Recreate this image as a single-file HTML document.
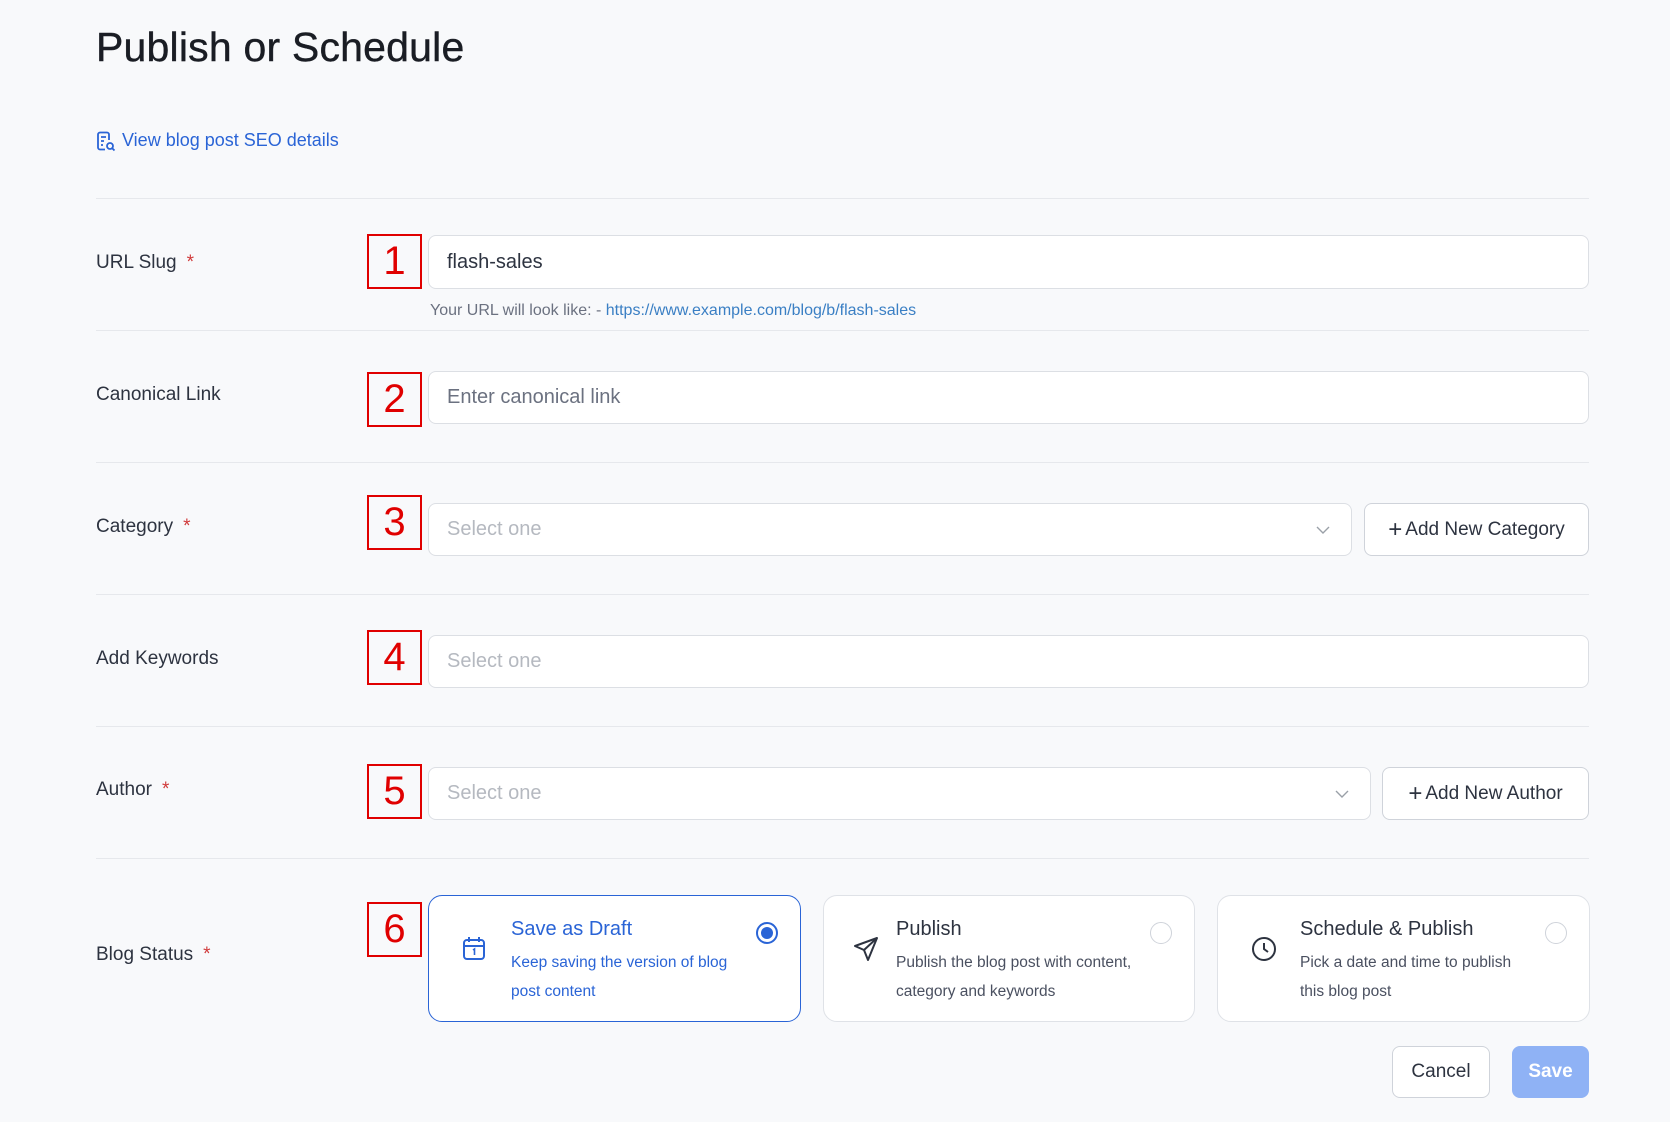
<!DOCTYPE html>
<html><head><meta charset="utf-8"><style>
*{box-sizing:border-box;margin:0;padding:0}
body{width:1670px;height:1122px;background:#f8f9fb;font-family:"Liberation Sans",sans-serif;position:relative;overflow:hidden;color:#2d3340}
.a{position:absolute}
h1{position:absolute;left:96px;top:24px;font-size:41px;font-weight:400;color:#1a1d24;letter-spacing:0.2px;-webkit-text-stroke:0.4px #1a1d24}
.hr{position:absolute;left:96px;width:1493px;height:1px;background:#e6e8ec}
.lbl{position:absolute;left:96px;font-size:19px;color:#2d3340;transform:translateY(-50%)}
.lbl i{color:#d03a3a;font-style:normal;margin-left:10px}
.box{position:absolute;left:367px;width:55px;height:55px;border:2.5px solid #e00000;color:#e00000;font-size:40px;text-align:center;line-height:50px}
.inp{position:absolute;background:#fff;border:1px solid #dcdfe4;border-radius:8px;font-size:20px;padding-left:18px;display:flex;align-items:center}
.ph{color:#b5b9c0}
.btn{position:absolute;background:#fff;border:1px solid #cfd3da;border-radius:8px;font-size:19px;color:#2d3340;display:flex;align-items:center;justify-content:center}
.card{position:absolute;top:895px;height:127px;background:#fff;border:1px solid #dfe2e7;border-radius:14px}
.card .t{position:absolute;left:82px;top:22px;font-size:20px}
.card .d{position:absolute;left:82px;top:52px;font-size:15.5px;line-height:29px;color:#4a5060}
.card .r{position:absolute;right:22px;top:26px;width:22px;height:22px;border:1.5px solid #cfd3da;border-radius:50%}
.card svg{position:absolute;left:33px;top:40px}
.chev{position:absolute;right:20px;top:18px}
</style></head><body>
<h1>Publish or Schedule</h1>
<svg class="a" style="left:96px;top:131px" width="20" height="21" viewBox="0 0 20 21" fill="none" stroke="#2a64d6" stroke-width="1.8"><path d="M13 9V3.5A2 2 0 0 0 11 1.5H4A2 2 0 0 0 2 3.5v13a2 2 0 0 0 2 2h5"/><path d="M5 6h5M5 10h3M5 14h2"/><circle cx="14" cy="15" r="3"/><path d="M16.2 17.2L18.5 19.5"/></svg>
<div class="a" style="left:122px;top:130px;font-size:18px;color:#2a64d6">View blog post SEO details</div>
<div class="hr" style="top:198px"></div>
<div class="hr" style="top:330px"></div>
<div class="hr" style="top:462px"></div>
<div class="hr" style="top:594px"></div>
<div class="hr" style="top:726px"></div>
<div class="hr" style="top:858px"></div>

<div class="lbl" style="top:263px">URL Slug<i>*</i></div>
<div class="lbl" style="top:395px">Canonical Link</div>
<div class="lbl" style="top:527px">Category<i>*</i></div>
<div class="lbl" style="top:659px">Add Keywords</div>
<div class="lbl" style="top:790px">Author<i>*</i></div>
<div class="lbl" style="top:955px">Blog Status<i>*</i></div>

<div class="box" style="top:234px">1</div>
<div class="box" style="top:372px">2</div>
<div class="box" style="top:495px">3</div>
<div class="box" style="top:630px">4</div>
<div class="box" style="top:764px">5</div>
<div class="box" style="top:902px">6</div>

<div class="inp" style="left:428px;top:235px;width:1161px;height:54px;color:#2d3340">flash-sales</div>
<div class="a" style="left:430px;top:302px;font-size:16px;color:#6b7180">Your URL will look like: - <span style="color:#3a7fc4">https://www.example.com/blog/b/flash-sales</span></div>
<div class="inp" style="left:428px;top:371px;width:1161px;height:53px;color:#6b7180">Enter canonical link</div>
<div class="inp ph" style="left:428px;top:503px;width:924px;height:53px">Select one<svg class="chev" width="16" height="16" viewBox="0 0 16 16" fill="none" stroke="#9aa0a8" stroke-width="1.4"><path d="M2 5l6 6 6-6"/></svg></div>
<div class="btn" style="left:1364px;top:503px;width:225px;height:53px"><span style="font-size:24px;margin-right:3px;font-weight:300">+</span>Add New Category</div>
<div class="inp ph" style="left:428px;top:635px;width:1161px;height:53px">Select one</div>
<div class="inp ph" style="left:428px;top:767px;width:943px;height:53px">Select one<svg class="chev" width="16" height="16" viewBox="0 0 16 16" fill="none" stroke="#9aa0a8" stroke-width="1.4"><path d="M2 5l6 6 6-6"/></svg></div>
<div class="btn" style="left:1382px;top:767px;width:207px;height:53px"><span style="font-size:24px;margin-right:3px;font-weight:300">+</span>Add New Author</div>

<div class="card" style="left:428px;width:373px;border-color:#2a64d6">
<svg width="24" height="26" viewBox="0 0 24 26" fill="none" stroke="#2a64d6" stroke-width="2"><rect x="2" y="4" width="20" height="19" rx="3"/><path d="M2 10h20M7 1v5M17 1v5"/><path d="M11 14l1.5-1v6" stroke-width="1.6"/></svg>
<div class="t" style="color:#2a64d6">Save as Draft</div>
<div class="d" style="color:#2a64d6">Keep saving the version of blog<br>post content</div>
<div class="r" style="border:2px solid #2a64d6"><div style="position:absolute;left:3px;top:3px;width:12px;height:12px;border-radius:50%;background:#2a64d6"></div></div>
</div>
<div class="card" style="left:823px;width:372px">
<svg style="left:29px" width="26" height="26" viewBox="0 0 26 26" fill="none" stroke="#2d3340" stroke-width="2" stroke-linejoin="round"><path d="M24 2L2 10l9 4 4 10z"/><path d="M24 2L11 14"/></svg>
<div class="t" style="left:72px">Publish</div>
<div class="d" style="left:72px">Publish the blog post with content,<br>category and keywords</div>
<div class="r"></div>
</div>
<div class="card" style="left:1217px;width:373px">
<svg width="26" height="26" viewBox="0 0 26 26" fill="none" stroke="#2d3340" stroke-width="2"><circle cx="13" cy="13" r="11"/><path d="M13 7v6l4 3"/></svg>
<div class="t">Schedule &amp; Publish</div>
<div class="d">Pick a date and time to publish<br>this blog post</div>
<div class="r"></div>
</div>

<div class="btn" style="left:1392px;top:1046px;width:98px;height:52px;font-size:19px">Cancel</div>
<div class="btn" style="left:1512px;top:1046px;width:77px;height:52px;background:#8fb2f5;border-color:#8fb2f5;color:#fff;font-weight:700">Save</div>
</body></html>
